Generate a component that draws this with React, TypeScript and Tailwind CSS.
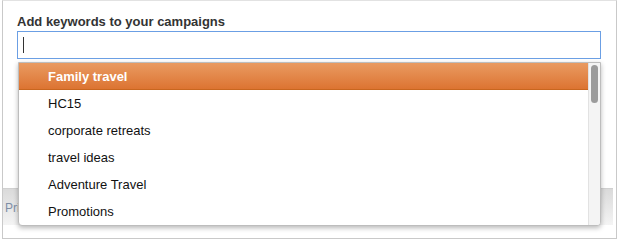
const KEYWORDS = ['Family travel', 'HC15', 'corporate retreats', 'travel ideas', 'Adventure Travel', 'Promotions']

function KeywordMenu() {
  return (
    <div className="absolute left-[15px] top-[61px] w-[583px] h-[164px] bg-white border border-[#bdbdbd] rounded-b-[4px] shadow-[0_2px_5px_rgba(0,0,0,0.28)] flex overflow-hidden">
      <ul className="flex-1">
        {KEYWORDS.map((k, i) => (
          <li
            key={k}
            className={`h-[27px] leading-[27px] pl-[29px] text-[13px] ${
              i === 0
                ? 'bg-gradient-to-b from-[#e99a60] to-[#dc7431] border-b border-[#c8661f] text-white font-bold leading-[26px]'
                : 'text-[#111]'
            }`}
          >
            {k}
          </li>
        ))}
      </ul>
      <div className="w-[12px] bg-[#f4f4f4] border-l border-[#e2e2e2] pt-[2px] flex justify-center">
        <div className="w-[7px] h-[38px] rounded-full bg-[#9b9b9b]" />
      </div>
    </div>
  )
}

export default function App() {
  return (
    <div className="w-[619px] h-[242px] bg-white" style={{ fontFamily: '"Liberation Sans", Arial, sans-serif' }}>
      <div className="relative ml-[2px] w-[615px] h-[239px] border border-[#c9c9c9] border-t-[#e2e2e2] bg-white flex flex-col">
        <label className="block pl-[14px] pt-[13px] h-[30px] text-[13px] leading-[16px] font-bold text-[#333]">
          Add keywords to your campaigns
        </label>
        <div className="ml-[14px] w-[584px] h-[28px] border border-[#6b9fe4] flex items-center pl-[5px]">
          <span className="w-px h-[16px] bg-[#333]" />
        </div>
        <div className="h-[129px]" />
        <div className="mr-[3px] h-[37px] bg-gradient-to-b from-[#dadada] to-[#f4f4f4] border-t border-[#d0d0d0] pl-[2px] pt-[12px] text-[12px] leading-[14px] text-[#7d8ea6]">
          Privacy
        </div>
        <KeywordMenu />
      </div>
    </div>
  )
}
